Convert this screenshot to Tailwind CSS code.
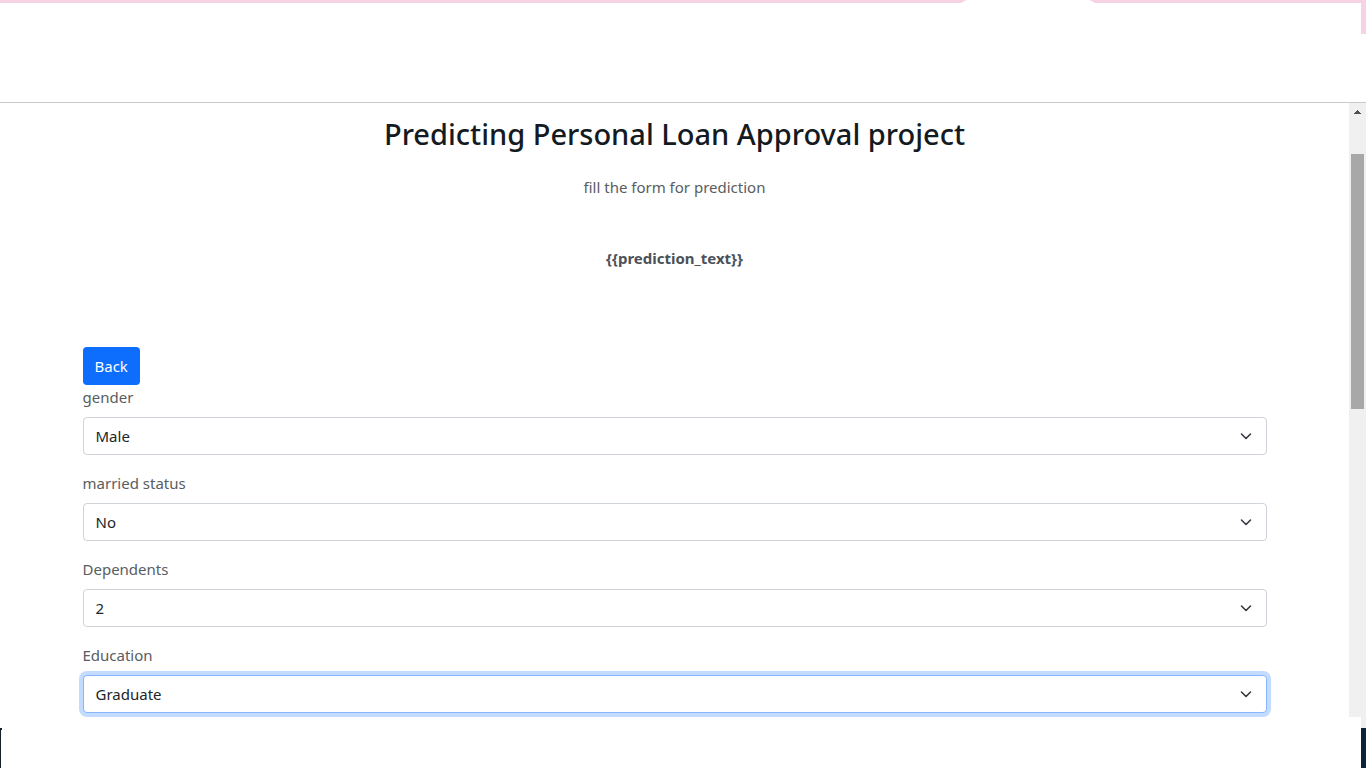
<!DOCTYPE html>
<html lang="en">
<head>
<meta charset="utf-8">
<meta name="viewport" content="width=device-width, initial-scale=1">
<title>Predicting Personal Loan Approval project</title>
<script src="https://cdn.jsdelivr.net/npm/@tailwindcss/browser@4"></script>
</head>
<body class="flex h-screen flex-col overflow-hidden bg-white font-['Noto_Sans',sans-serif] text-[15px] leading-6 text-[#585d61]">
<!-- Browser frame -->
<header class="flex h-[103px] shrink-0 items-start border-b border-[#c9c9c9]">
  <div class="flex min-w-0 flex-1">
    <div class="h-[3px] w-[960px] bg-[#f6d3e2]"></div>
    <svg class="h-[3px] w-[8px] shrink-0" viewBox="0 0 8 3" aria-hidden="true"><path d="M0 0H8Q5 0 3 2Q2 3 0 3Z" fill="#f6d3e2"/></svg>
    <div class="w-[120px] shrink-0"></div>
    <svg class="h-[3px] w-[8px] shrink-0" viewBox="0 0 8 3" aria-hidden="true"><path d="M8 0H0Q3 0 5 2Q6 3 8 3Z" fill="#f6d3e2"/></svg>
    <div class="h-[3px] flex-1 bg-[#f6d3e2]"></div>
  </div>
  <div class="h-[34px] w-[5px] shrink-0 bg-[#f6d3e2]"></div>
</header>
<div class="flex min-h-0 flex-1">
  <main class="min-w-0 flex-1 overflow-hidden">
    <div class="mx-auto max-w-[1184px]">
      <div class="flex flex-col items-center text-center">
        <h1 class="mt-3 text-[29px] leading-[38px] font-medium text-[#141a21]">Predicting Personal Loan Approval project</h1>
        <p class="mt-[22px]">fill the form for prediction</p>
        <p class="mt-[47px] font-bold text-[#4c5257]">{{prediction_text}}</p>
      </div>
      <button type="button" class="mt-[77px] block h-[38px] rounded bg-[#0d6efd] px-3 text-white">Back</button>
      <form class="flex flex-col gap-4 text-[#212529]">
        <div class="flex flex-col gap-2">
          <label for="gender" class="text-[#585d61]">gender</label>
          <div class="relative">
            <select id="gender" class="block h-[38px] w-full appearance-none rounded border border-[#ced4da] bg-white px-3 outline-none"><option>Male</option><option>Female</option></select>
            <svg class="pointer-events-none absolute top-[11px] right-[13px] size-4" viewBox="0 0 16 16" fill="none" stroke="#343a40" stroke-width="1.6" stroke-linecap="round" stroke-linejoin="round" aria-hidden="true"><path d="M3.5 6 8 10.5 12.5 6"/></svg>
          </div>
        </div>
        <div class="flex flex-col gap-2">
          <label for="married" class="text-[#585d61]">married status</label>
          <div class="relative">
            <select id="married" class="block h-[38px] w-full appearance-none rounded border border-[#ced4da] bg-white px-3 outline-none"><option>No</option><option>Yes</option></select>
            <svg class="pointer-events-none absolute top-[11px] right-[13px] size-4" viewBox="0 0 16 16" fill="none" stroke="#343a40" stroke-width="1.6" stroke-linecap="round" stroke-linejoin="round" aria-hidden="true"><path d="M3.5 6 8 10.5 12.5 6"/></svg>
          </div>
        </div>
        <div class="flex flex-col gap-2">
          <label for="dependents" class="text-[#585d61]">Dependents</label>
          <div class="relative">
            <select id="dependents" class="block h-[38px] w-full appearance-none rounded border border-[#ced4da] bg-white px-3 outline-none"><option>0</option><option>1</option><option selected>2</option><option>3+</option></select>
            <svg class="pointer-events-none absolute top-[11px] right-[13px] size-4" viewBox="0 0 16 16" fill="none" stroke="#343a40" stroke-width="1.6" stroke-linecap="round" stroke-linejoin="round" aria-hidden="true"><path d="M3.5 6 8 10.5 12.5 6"/></svg>
          </div>
        </div>
        <div class="flex flex-col gap-2">
          <label for="education" class="text-[#585d61]">Education</label>
          <div class="relative">
            <select id="education" class="block h-[38px] w-full appearance-none rounded border border-[#86b7fe] bg-white px-3 ring-4 ring-[#c2dbfe] outline-none"><option>Graduate</option><option>Not Graduate</option></select>
            <svg class="pointer-events-none absolute top-[11px] right-[13px] size-4" viewBox="0 0 16 16" fill="none" stroke="#343a40" stroke-width="1.6" stroke-linecap="round" stroke-linejoin="round" aria-hidden="true"><path d="M3.5 6 8 10.5 12.5 6"/></svg>
          </div>
        </div>
      </form>
    </div>
  </main>
  <!-- Scroll bar -->
  <div class="flex w-[17px] shrink-0 flex-col bg-[#f0f0f0] pr-[2px] pl-[2px]">
    <svg class="mt-[7px] h-[4px] w-[7px] self-center" viewBox="0 0 7 4" aria-hidden="true"><path d="M3 0h1v1h1v1h1v1h1v1H0V3h1V2h1V1h1Z" fill="#505050"/></svg>
    <div class="mt-10 h-[255px] bg-[#a8a8a8]"></div>
  </div>
</div>
<footer class="flex h-[51px] shrink-0 justify-between">
  <div class="mt-[11px] w-[2px] border-t-2 border-l border-[#14212b]"></div>
  <div class="w-[5px] border-t-[11px] border-[#f0f0f0] bg-[#0b2438]"></div>
</footer>
</body>
</html>
